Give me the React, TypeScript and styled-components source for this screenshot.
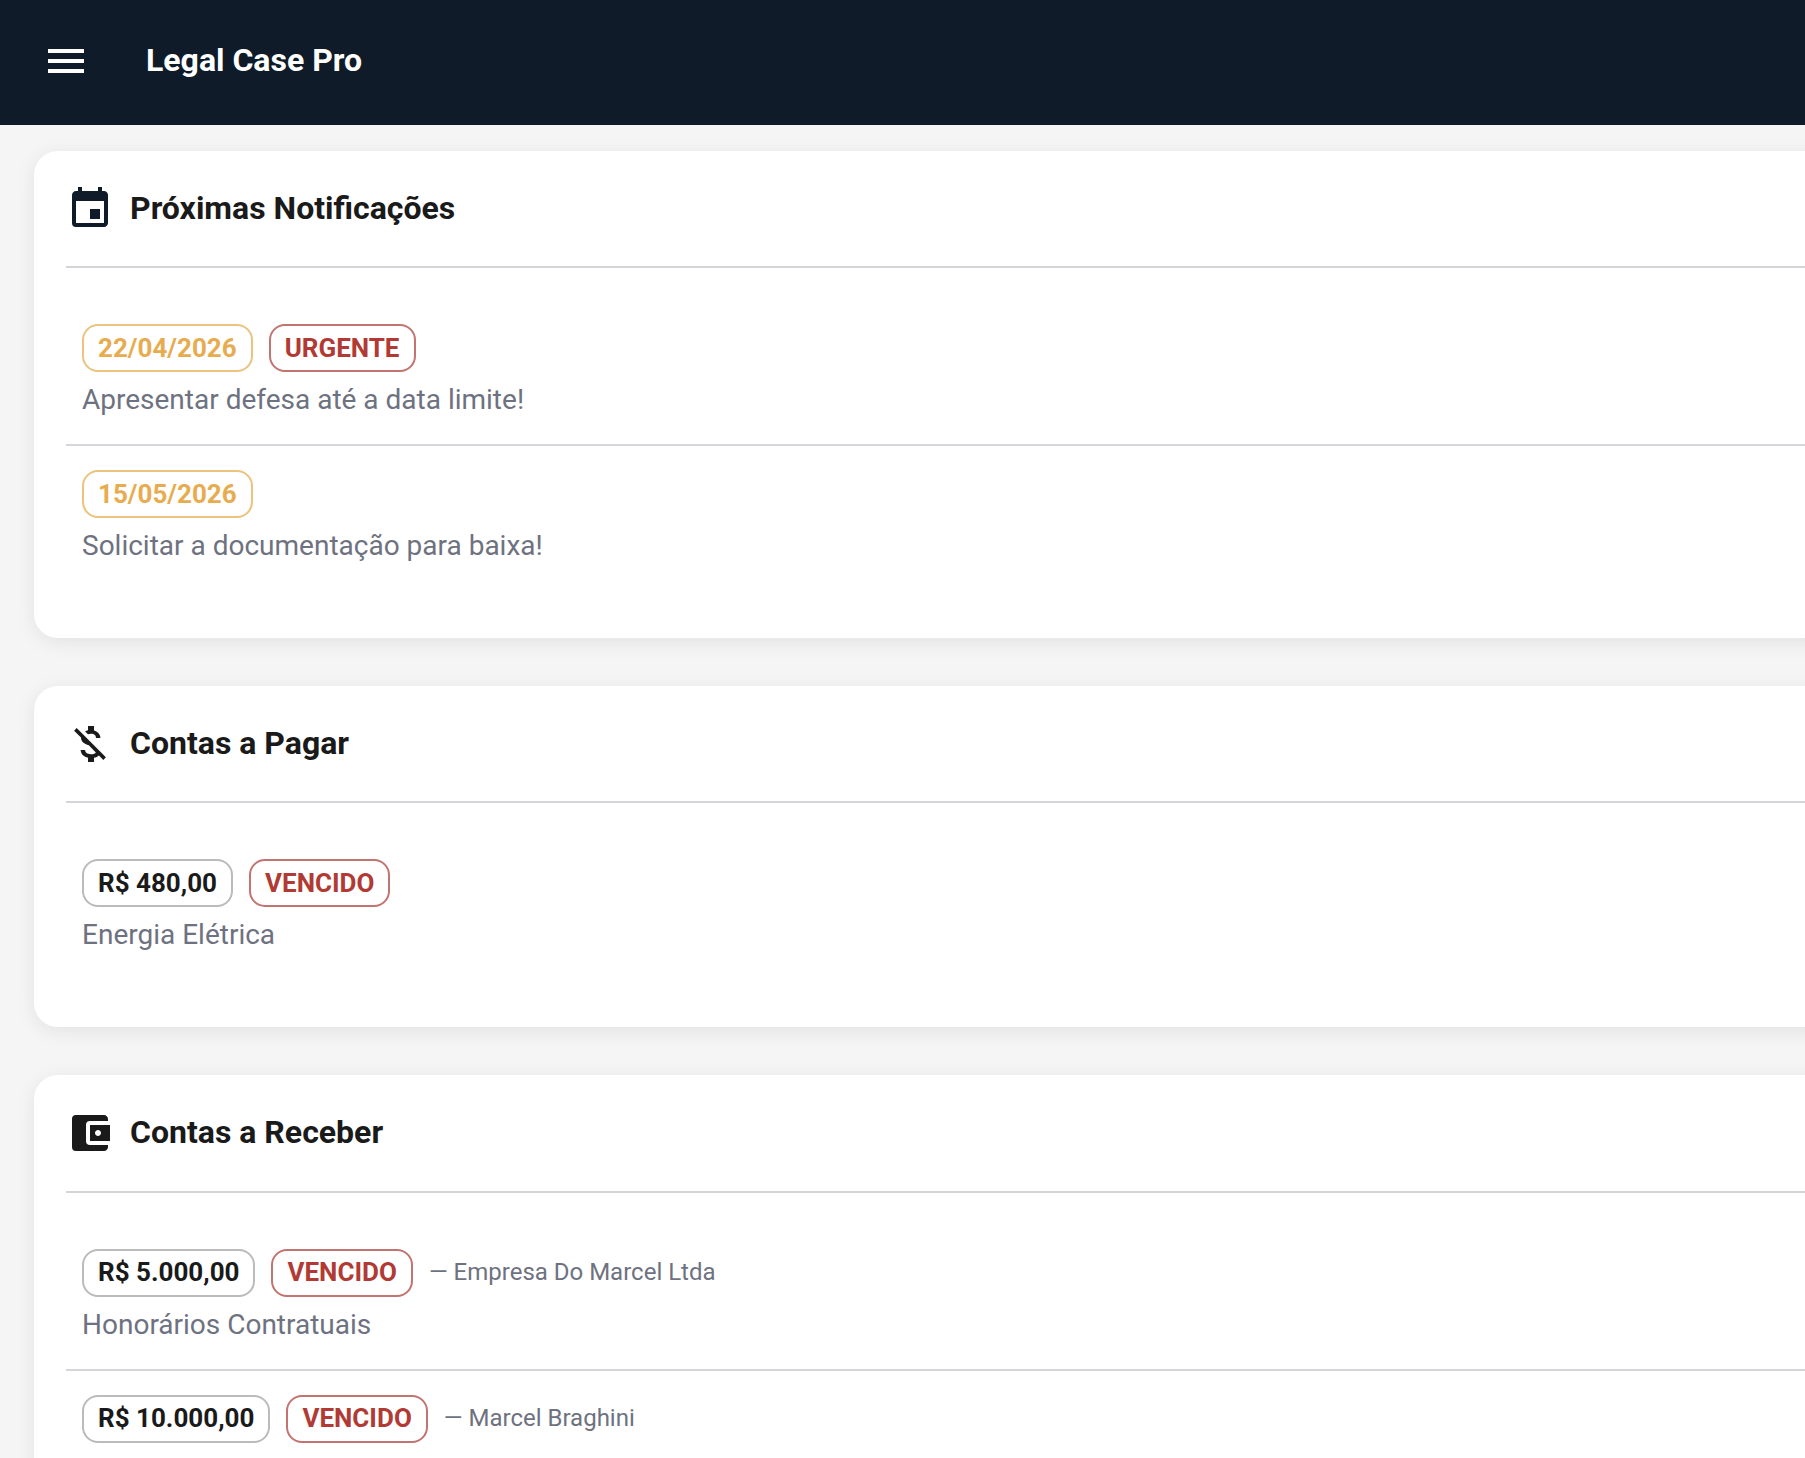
import React from 'react';
import styled, { createGlobalStyle } from 'styled-components';
import { MdMenu, MdEvent, MdMoneyOff, MdAccountBalanceWallet } from 'react-icons/md';

const GlobalStyle = createGlobalStyle`
  * { box-sizing: border-box; }
  html, body { margin: 0; height: 100%; overflow: hidden; }
  body {
    background: #f5f5f5;
    font-family: Roboto, 'Noto Sans', sans-serif;
    color: #1a1a1a;
  }
  #root { height: 100%; }
`;

const Page = styled.div`
  display: flex;
  flex-direction: column;
  height: 1458px;
  overflow: hidden;
`;

const AppBar = styled.header`
  display: flex;
  align-items: center;
  flex: none;
  height: 125px;
  padding: 0 42px 3px;
  gap: 56px;
  background: #0f1b29;
  color: #fff;
`;

const MenuButton = styled.button`
  display: flex;
  padding: 0;
  border: 0;
  background: none;
  color: inherit;
  font-size: 48px;
`;

const AppTitle = styled.h1`
  margin: 0;
  padding-bottom: 2px;
  font-size: 32px;
  line-height: 48px;
  font-weight: 700;
`;

const Content = styled.main`
  display: flex;
  flex-direction: column;
  gap: 48px;
  width: 1880px;
  padding: 26px 34px 0;
`;

const Card = styled.section`
  flex: none;
  padding: 32px 32px 48px;
  border-radius: 24px;
  background: #fff;
  box-shadow: 0 4px 20px rgba(0, 0, 0, 0.08);
`;

const CardHeader = styled.header`
  display: flex;
  align-items: flex-start;
  gap: 16px;
  height: 85.2px;
  padding-top: 2px;
  border-bottom: 2px solid #d4d5d9;
`;

const HeaderIcon = styled.span<{ $color: string }>`
  display: flex;
  font-size: 48px;
  color: ${(p) => p.$color};
`;

const CardTitle = styled.h2`
  margin: 0;
  font-size: 32px;
  line-height: 46px;
  font-weight: 700;
`;

const List = styled.ul`
  margin: 0;
  padding: 32px 0 0;
  list-style: none;
`;

const Item = styled.li`
  padding: 24px 16px 26px;
  height: 144px;

  & + & {
    height: 146px;
    border-top: 2px solid #d4d6da;
  }
`;

const ChipRow = styled.div`
  display: flex;
  align-items: center;
  gap: 16px;
`;

type Tone = 'date' | 'danger' | 'neutral';

const tones: Record<Tone, { text: string; border: string }> = {
  date: { text: '#e8ac50', border: '#ecc27e' },
  danger: { text: '#b13a34', border: '#c27470' },
  neutral: { text: '#1a1a1a', border: '#bbbbbb' },
};

const Chip = styled.span<{ $tone: Tone }>`
  height: 48px;
  padding: 0.85px 14px 0;
  border: 2px solid ${(p) => tones[p.$tone].border};
  border-radius: 16px;
  font-size: 26px;
  line-height: 43px;
  font-weight: 700;
  white-space: nowrap;
  color: ${(p) => tones[p.$tone].text};
`;

const Payer = styled.span`
  font-size: 24px;
  line-height: 39.4px;
  color: #6e7280;
`;

const Description = styled.p`
  margin: 8px 0 0;
  font-size: 28px;
  line-height: 40px;
  color: #6e7280;
`;

type Entry = { chips: [string, Tone][]; payer?: string; text?: string };
type Section = { title: string; icon: React.ReactNode; color: string; entries: Entry[] };

const sections: Section[] = [
  {
    title: 'Próximas Notificações',
    icon: <MdEvent />,
    color: '#0f1b29',
    entries: [
      { chips: [['22/04/2026', 'date'], ['URGENTE', 'danger']], text: 'Apresentar defesa até a data limite!' },
      { chips: [['15/05/2026', 'date']], text: 'Solicitar a documentação para baixa!' },
    ],
  },
  {
    title: 'Contas a Pagar',
    icon: <MdMoneyOff />,
    color: '#1a1a1a',
    entries: [{ chips: [['R$ 480,00', 'neutral'], ['VENCIDO', 'danger']], text: 'Energia Elétrica' }],
  },
  {
    title: 'Contas a Receber',
    icon: <MdAccountBalanceWallet />,
    color: '#1a1a1a',
    entries: [
      {
        chips: [['R$ 5.000,00', 'neutral'], ['VENCIDO', 'danger']],
        payer: '— Empresa Do Marcel Ltda',
        text: 'Honorários Contratuais',
      },
      {
        chips: [['R$ 10.000,00', 'neutral'], ['VENCIDO', 'danger']],
        payer: '— Marcel Braghini',
      },
    ],
  },
];

export default function App() {
  return (
    <>
      <GlobalStyle />
      <Page>
        <AppBar>
          <MenuButton aria-label="Menu">
            <MdMenu />
          </MenuButton>
          <AppTitle>Legal Case Pro</AppTitle>
        </AppBar>
        <Content>
          {sections.map((section) => (
            <Card key={section.title}>
              <CardHeader>
                <HeaderIcon $color={section.color}>{section.icon}</HeaderIcon>
                <CardTitle>{section.title}</CardTitle>
              </CardHeader>
              <List>
                {section.entries.map((entry) => (
                  <Item key={entry.chips[0][0]}>
                    <ChipRow>
                      {entry.chips.map(([label, tone]) => (
                        <Chip key={label} $tone={tone}>
                          {label}
                        </Chip>
                      ))}
                      {entry.payer && <Payer>{entry.payer}</Payer>}
                    </ChipRow>
                    {entry.text && <Description>{entry.text}</Description>}
                  </Item>
                ))}
              </List>
            </Card>
          ))}
        </Content>
      </Page>
    </>
  );
}
